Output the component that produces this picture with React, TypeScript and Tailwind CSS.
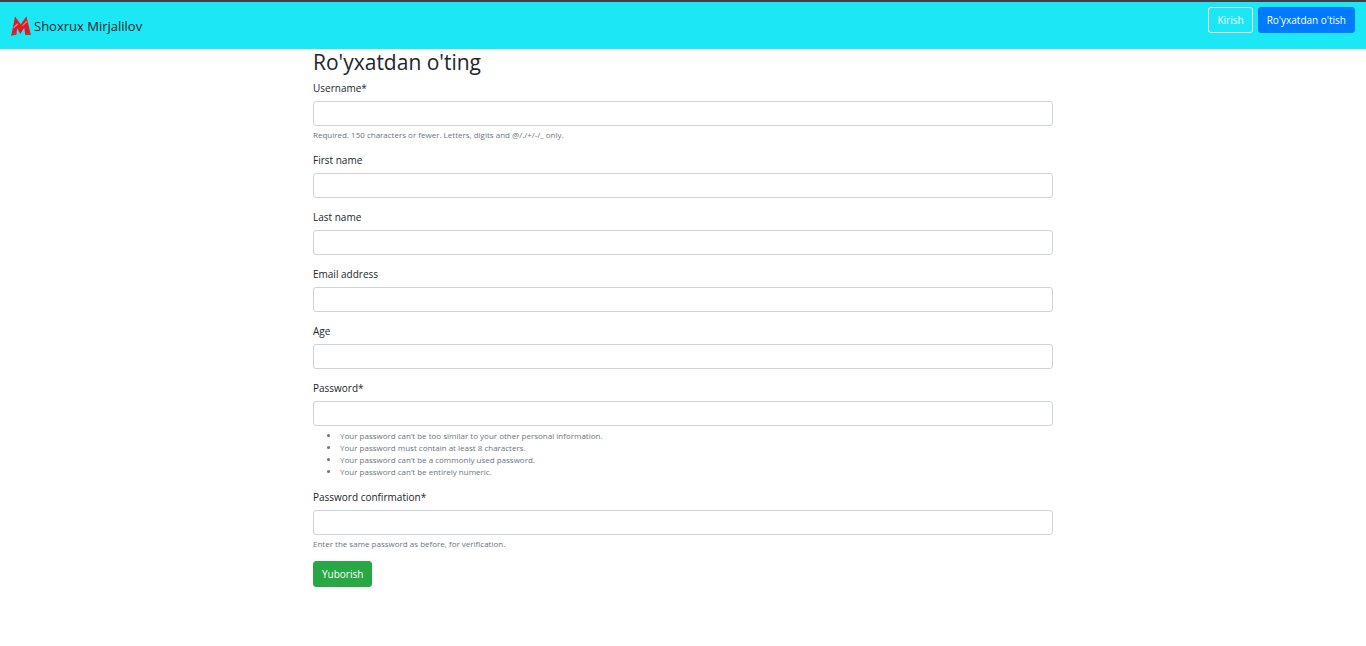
import type { ReactNode } from "react";

type FieldProps = {
  id: string;
  label: string;
  type?: string;
  required?: boolean;
  children?: ReactNode;
};

function Field({ id, label, type = "text", required = false, children }: FieldProps) {
  return (
    <div className="mb-[11px]">
      <label htmlFor={id} className="mb-[5px] block text-[10px] leading-4">
        {label}
        {required && "*"}
      </label>
      <input
        id={id}
        name={id}
        type={type}
        required={required}
        className="block h-[25px] w-full rounded-[3px] border border-[#ced4da] bg-white px-2 text-[10px] text-[#495057] outline-none focus:border-[#80bdff]"
      />
      {children}
    </div>
  );
}

function Hint({ children }: { children: ReactNode }) {
  return <small className="mt-[3px] block text-[8px] leading-3 text-[#6c757d]">{children}</small>;
}

function Logo() {
  return (
    <svg viewBox="0 0 20 20" className="h-5 w-5" aria-hidden="true">
      <path d="M0.3 19.5 L4 0.5 L9.8 8.6 L15.4 0.3 L19.8 18.8 L14.4 19 L13.2 11.8 L9.2 18 L6.2 12.2 L5.2 18.8 Z" fill="#e01a20" />
      <path d="M2.5 10.8 L6.2 7.2 L7.4 8.6 L2.2 12.8 Z M11.4 9 L15.8 4.6 L16.4 6 L11 10.8 Z" fill="#f0787a" />
      <path d="M0.3 19.5 L0.9 16.8 L5.5 16.8 L5.2 18.8 Z M14 16.8 L19.3 16.6 L19.8 18.8 L14.4 19 Z" fill="#b8363c" />
    </svg>
  );
}

const passwordRules = [
  "Your password can’t be too similar to your other personal information.",
  "Your password must contain at least 8 characters.",
  "Your password can’t be a commonly used password.",
  "Your password can’t be entirely numeric.",
];

export default function App() {
  return (
    <div className="min-h-screen bg-white font-['Open_Sans','Noto_Sans',sans-serif] text-[#212529]">
      <header className="flex items-start justify-between border-t-2 border-[#3c4048] bg-[#1ce8f5] px-[11px] pt-[5px] pb-3">
        <a href="#" className="flex items-center gap-[3px] pt-2 text-[13px] leading-[22px]">
          <Logo />
          Shoxrux Mirjalilov
        </a>
        <nav className="flex gap-[5px] text-[10px] leading-4">
          <a href="#" className="rounded-[3px] border border-[#f8f9fa] px-2 py-1 text-[#f8f9fa]">
            Kirish
          </a>
          <a href="#" className="rounded-[3px] border border-[#007bff] bg-[#007bff] px-2 py-1 text-white">
            Ro'yxatdan o'tish
          </a>
        </nav>
      </header>

      <main className="mx-auto w-full max-w-[740px]">
        <h2 className="mb-[5px] text-[21px] leading-[26px] font-medium">Ro'yxatdan o'ting</h2>
        <form>
          <Field id="username" label="Username" required>
            <Hint>Required. 150 characters or fewer. Letters, digits and @/./+/-/_ only.</Hint>
          </Field>
          <Field id="first_name" label="First name" />
          <Field id="last_name" label="Last name" />
          <Field id="email" label="Email address" type="email" />
          <Field id="age" label="Age" />
          <Field id="password1" label="Password" type="password" required>
            <ul className="mt-1 list-disc pl-[27px] text-[8px] leading-3 text-[#6c757d]">
              {passwordRules.map((rule) => (
                <li key={rule}>{rule}</li>
              ))}
            </ul>
          </Field>
          <Field id="password2" label="Password confirmation" type="password" required>
            <Hint>Enter the same password as before, for verification.</Hint>
          </Field>
          <button
            type="submit"
            className="block rounded-[3px] border border-[#28a745] bg-[#28a745] px-2 py-1 text-[10px] leading-4 text-white"
          >
            Yuborish
          </button>
        </form>
      </main>
    </div>
  );
}
